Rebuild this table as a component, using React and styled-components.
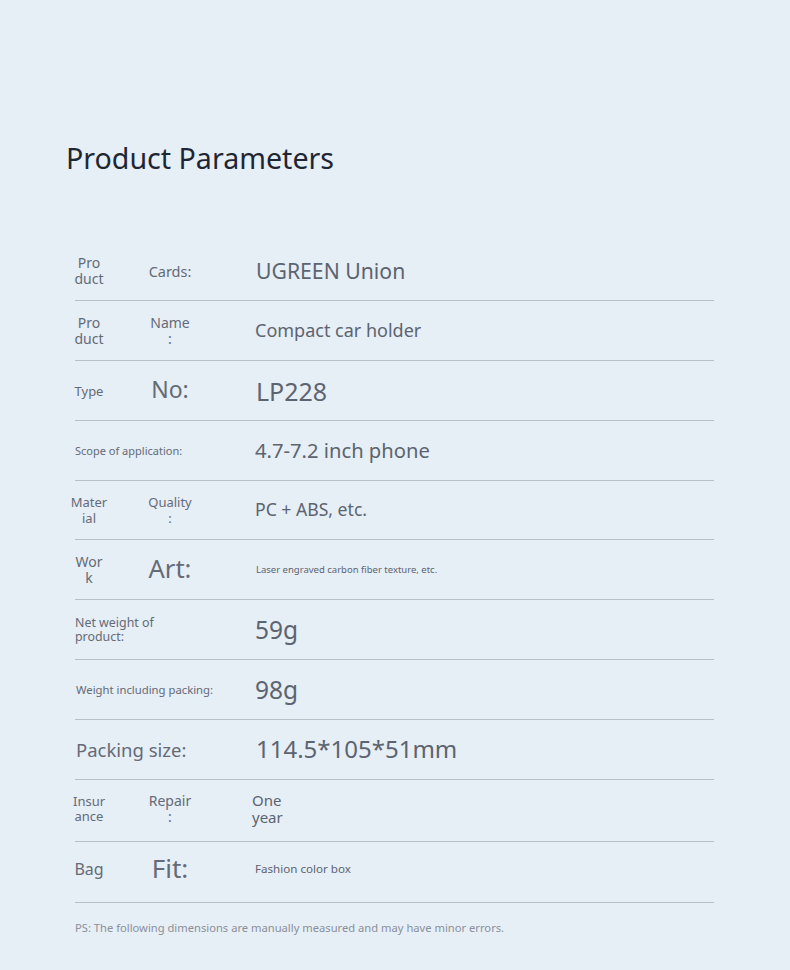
import React from "react";
import styled, { createGlobalStyle } from "styled-components";

const GlobalStyle = createGlobalStyle`
  body {
    margin: 0;
    background: #e6eef6;
    font-family: "Noto Sans", "Open Sans", sans-serif;
  }
`;

const Page = styled.div`
  width: 790px;
  min-height: 970px;
  padding-top: 138px;
  box-sizing: border-box;
`;

const Title = styled.h1`
  margin: 0 0 63px 66px;
  font-size: 28.6px;
  line-height: 40px;
  font-weight: 400;
  color: #1f2633;
`;

const Table = styled.div`
  margin-left: 75px;
  width: 639px;
`;

const Row = styled.div`
  display: flex;
  align-items: center;
  height: ${props => props.height || 60}px;
  padding-bottom: ${props => props.lift || 0}px;
  box-sizing: border-box;
  border-bottom: 1px solid #b8bfc8;
`;

const LabelArea = styled.div`
  width: 180px;
  flex-shrink: 0;
  display: flex;
  align-items: center;
`;

const KeyCell = styled.div`
  width: 28px;
  display: flex;
  flex-direction: column;
  align-items: center;
  font-size: ${props => props.size}px;
  line-height: ${props => props.lh || 16}px;
  color: #646b76;
  white-space: nowrap;
`;

const SubCell = styled.div`
  width: 44px;
  margin-left: 45px;
  margin-bottom: ${props => props.raise || 0}px;
  display: flex;
  flex-direction: column;
  align-items: center;
  font-size: ${props => props.size}px;
  line-height: 16px;
  color: #646b76;
  white-space: nowrap;
`;

const WideLabel = styled.div`
  padding-left: ${props => props.indent || 0}px;
  font-size: ${props => props.size}px;
  line-height: ${props => props.lh || 14}px;
  color: #646b76;
  white-space: nowrap;
`;

const Value = styled.div`
  margin-left: ${props => props.indent || 0}px;
  display: flex;
  flex-direction: column;
  font-size: ${props => props.size}px;
  line-height: ${props => props.lh || 1.2};
  color: #5c6470;
  white-space: nowrap;
`;

const Note = styled.p`
  margin: 17px 0 0 75px;
  font-size: 11.2px;
  color: #8a9099;
`;

const Lines = ({ lines }) => lines.map(line => <span key={line}>{line}</span>);

const rows = [
  { key: ["Pro", "duct"], keySize: 14, sub: ["Cards:"], subSize: 14.5, value: ["UGREEN Union"], size: 21.2, indent: 1 },
  { key: ["Pro", "duct"], keySize: 14, sub: ["Name", ":"], subSize: 14, value: ["Compact car holder"], size: 18 },
  { key: ["Type"], keySize: 13, sub: ["No:"], subSize: 23, raise: 4, value: ["LP228"], size: 25, indent: 1 },
  { wide: ["Scope of application:"], wideSize: 11, value: ["4.7-7.2 inch phone"], size: 20.2 },
  { key: ["Mater", "ial"], keySize: 13, sub: ["Quality", ":"], subSize: 13, value: ["PC + ABS, etc."], size: 17.6, height: 59 },
  { key: ["Wor", "k"], keySize: 14, sub: ["Art:"], subSize: 25.5, raise: 4, value: ["Laser engraved carbon fiber texture, etc."], size: 9.5, indent: 1 },
  { wide: ["Net weight of", "product:"], wideSize: 12.4, value: ["59g"], size: 24.5 },
  { wide: ["Weight including packing:"], wideSize: 11.3, wideIndent: 1, value: ["98g"], size: 24.5 },
  { wide: ["Packing size:"], wideSize: 18.5, wideIndent: 1, value: ["114.5*105*51mm"], size: 24, indent: 1 },
  { key: ["Insur", "ance"], keySize: 13, keyLh: 15, sub: ["Repair", ":"], subSize: 14, value: ["One", "year"], size: 15, lh: "17px", indent: -3, height: 62, lift: 3 },
  { key: ["Bag"], keySize: 16, sub: ["Fit:"], subSize: 26, raise: 2, value: ["Fashion color box"], size: 11.6, height: 61, lift: 6 }
];

export default function App() {
  return (
    <Page>
      <GlobalStyle />
      <Title>Product Parameters</Title>
      <Table>
        {rows.map((row, i) => (
          <Row key={i} height={row.height} lift={row.lift}>
            <LabelArea>
              {row.wide ? (
                <WideLabel size={row.wideSize} indent={row.wideIndent}>
                  {row.wide.map(l => (
                    <div key={l}>{l}</div>
                  ))}
                </WideLabel>
              ) : (
                <>
                  <KeyCell size={row.keySize} lh={row.keyLh}>
                    <Lines lines={row.key} />
                  </KeyCell>
                  <SubCell size={row.subSize} raise={row.raise}>
                    <Lines lines={row.sub} />
                  </SubCell>
                </>
              )}
            </LabelArea>
            <Value size={row.size} lh={row.lh} indent={row.indent}>
              <Lines lines={row.value} />
            </Value>
          </Row>
        ))}
      </Table>
      <Note>PS: The following dimensions are manually measured and may have minor errors.</Note>
    </Page>
  );
}
